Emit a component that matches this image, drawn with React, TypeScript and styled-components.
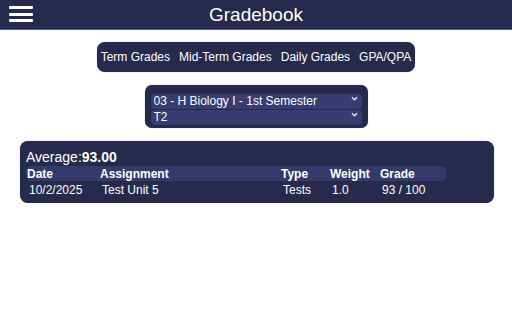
import React from "react";
import styled, { createGlobalStyle } from "styled-components";

const Global = createGlobalStyle`
  html, body { margin: 0; padding: 0; background: #ffffff; }
  body { font-family: "Liberation Sans", Arial, sans-serif; color: #fff; }
  * { box-sizing: border-box; }
`;

const Page = styled.div`
  width: 512px;
  display: flex;
  flex-direction: column;
  align-items: center;
`;

const TopBar = styled.header`
  width: 100%;
  height: 30px;
  background: #262a4c;
  border-bottom: 1px solid #5b5f92;
  display: flex;
  align-items: center;
  justify-content: center;
  position: relative;
`;

const Burger = styled.button`
  position: absolute;
  left: 9px;
  top: 6px;
  width: 24px;
  height: 16px;
  padding: 0;
  border: none;
  background: transparent;
  display: flex;
  flex-direction: column;
  justify-content: space-between;
  span {
    display: block;
    height: 3px;
    background: #fff;
    border-radius: 1px;
  }
`;

const Title = styled.h1`
  margin: 0;
  font-size: 19px;
  font-weight: 400;
  color: #fff;
  line-height: 28px;
`;

const Tabs = styled.nav`
  margin-top: 12px;
  height: 30px;
  padding: 0 4px;
  background: #262a4c;
  border-radius: 8px;
  display: flex;
  align-items: center;
  gap: 9px;
  box-shadow: 0 0 1px rgba(0,0,0,0.5);
`;

const Tab = styled.a`
  font-size: 12px;
  color: #fff;
  white-space: nowrap;
  cursor: pointer;
`;

const SelectPanel = styled.div`
  margin-top: 13px;
  width: 223px;
  padding: 6px;
  background: #262a4c;
  border-radius: 7px;
  display: flex;
  flex-direction: column;
  gap: 1px;
  box-shadow: 0 0 1px rgba(0,0,0,0.5);
`;

const SelectWrap = styled.div`
  position: relative;
  height: 15px;
`;

const Select = styled.select`
  appearance: none;
  -webkit-appearance: none;
  width: 100%;
  height: 15px;
  border: none;
  border-radius: 4px;
  background: #383c70;
  color: #fff;
  font-family: "Liberation Sans", Arial, sans-serif;
  font-size: 12px;
  line-height: 15px;
  padding: 0 0 0 3px;
  outline: none;
`;

const Chevron = styled.svg`
  position: absolute;
  right: 4px;
  top: 5px;
  width: 7px;
  height: 5px;
  pointer-events: none;
`;

const Card = styled.section`
  margin-top: 13px;
  width: 474px;
  align-self: flex-start;
  margin-left: 20px;
  padding: 7px 6px 6px 6px;
  background: #262a4c;
  border-radius: 8px;
  box-shadow: 0 0 1px rgba(0,0,0,0.5);
`;

const Average = styled.div`
  font-size: 14px;
  line-height: 18px;
  b { font-weight: 700; }
`;

const Row = styled.div<{ $head?: boolean }>`
  width: 420px;
  display: grid;
  grid-template-columns: 73px 181px 49px 50px 67px;
  height: ${(p) => (p.$head ? "15px" : "16px")};
  align-items: center;
  font-size: 12px;
  font-weight: ${(p) => (p.$head ? 700 : 400)};
  background: ${(p) => (p.$head ? "#35396b" : "transparent")};
  border-radius: ${(p) => (p.$head ? "5px" : "0")};
  padding-top: ${(p) => (p.$head ? "0" : "2px")};
`;

const Cell = styled.span<{ $head?: boolean }>`
  padding-left: ${(p) => (p.$head ? "1px" : "3px")};
  white-space: nowrap;
`;

const ChevronIcon = () => (
  <Chevron viewBox="0 0 7 5">
    <path d="M1 1.2 L3.5 3.7 L6 1.2" stroke="#e8e8f4" strokeWidth="1.4" fill="none" />
  </Chevron>
);

export default function App() {
  const cols = ["Date", "Assignment", "Type", "Weight", "Grade"];
  const data = ["10/2/2025", "Test Unit 5", "Tests", "1.0", "93 / 100"];
  return (
    <Page>
      <Global />
      <TopBar>
        <Burger aria-label="menu">
          <span />
          <span />
          <span />
        </Burger>
        <Title>Gradebook</Title>
      </TopBar>
      <Tabs>
        <Tab>Term Grades</Tab>
        <Tab>Mid-Term Grades</Tab>
        <Tab>Daily Grades</Tab>
        <Tab>GPA/QPA</Tab>
      </Tabs>
      <SelectPanel>
        <SelectWrap>
          <Select defaultValue="bio">
            <option value="bio">03 - H Biology I - 1st Semester</option>
          </Select>
          <ChevronIcon />
        </SelectWrap>
        <SelectWrap>
          <Select defaultValue="t2">
            <option value="t2">T2</option>
          </Select>
          <ChevronIcon />
        </SelectWrap>
      </SelectPanel>
      <Card>
        <Average>
          Average:<b>93.00</b>
        </Average>
        <Row $head>
          {cols.map((c) => (
            <Cell $head key={c}>{c}</Cell>
          ))}
        </Row>
        <Row>
          {data.map((c) => (
            <Cell key={c}>{c}</Cell>
          ))}
        </Row>
      </Card>
    </Page>
  );
}
